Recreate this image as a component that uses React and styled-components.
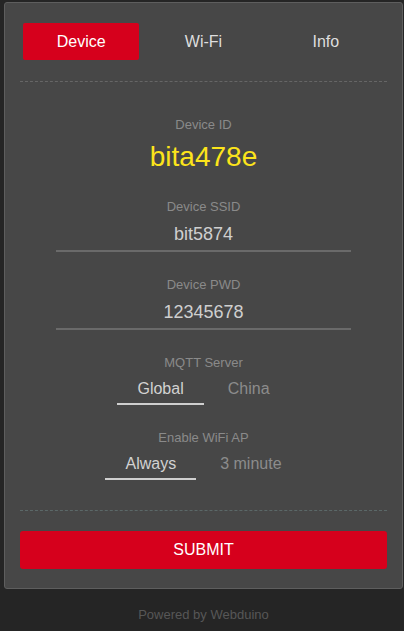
import React, { useState } from "react";
import styled, { createGlobalStyle } from "styled-components";

const GlobalStyle = createGlobalStyle`
  html, body {
    margin: 0;
    padding: 0;
    background: #252525;
    font-family: "Liberation Sans", Arial, sans-serif;
  }
`;

const Page = styled.div`
  min-height: 631px;
  padding: 2px 1px 0 4px;
  box-sizing: border-box;
`;

const Card = styled.div`
  background: #474747;
  border: 1px solid #5e5e5e;
  border-radius: 3px;
  padding: 17px 15px 19px;
  box-sizing: border-box;
`;

const Tabs = styled.div`
  display: grid;
  grid-template-columns: repeat(3, 1fr);
`;

const Tab = styled.div`
  margin: 3px;
  height: 37px;
  line-height: 37px;
  text-align: center;
  font-size: 16px;
  border-radius: 2px;
  color: ${(p) => (p.$active ? "#ffffff" : "#dedede")};
  background: ${(p) => (p.$active ? "#d6001c" : "transparent")};
  cursor: pointer;
`;

const Divider = styled.div`
  margin-top: ${(p) => p.$top}px;
  border-top: 1px dashed ${(p) => p.$color || "#666"};
`;

const Form = styled.div`
  text-align: center;
`;

const Label = styled.div`
  font-size: 13px;
  line-height: 16px;
  color: #8a8a8a;
  margin-top: ${(p) => p.$top}px;
`;

const DeviceId = styled.div`
  margin-top: 8px;
  font-size: 28px;
  line-height: 32px;
  color: #fce41b;
`;

const Field = styled.div`
  width: 295px;
  margin: 7px auto 0;
  padding-bottom: 4px;
  border-bottom: 2px solid #6a6a6a;
  font-size: 18px;
  line-height: 24px;
  color: #cfcfcf;
`;

const Options = styled.div`
  margin-top: 8px;
  display: flex;
  justify-content: center;
  gap: 4px;
`;

const Option = styled.div`
  padding: 0 20px 4px;
  font-size: 16px;
  line-height: 20px;
  color: ${(p) => (p.$active ? "#d2d2d2" : "#8c8c8c")};
  border-bottom: 2px solid ${(p) => (p.$active ? "#cfcfcf" : "transparent")};
  cursor: pointer;
`;

const Submit = styled.button`
  display: block;
  width: 100%;
  margin-top: 20px;
  height: 38px;
  border: none;
  border-radius: 3px;
  background: #d6001c;
  color: #fff;
  font-family: inherit;
  font-size: 16px;
`;

const Footer = styled.div`
  margin-top: 17px;
  text-align: center;
  font-size: 13px;
  line-height: 17px;
  color: #575757;
`;

function OptionGroup({ items, value, onChange }) {
  return (
    <Options>
      {items.map((item) => (
        <Option key={item} $active={item === value} onClick={() => onChange(item)}>
          {item}
        </Option>
      ))}
    </Options>
  );
}

export default function App() {
  const [tab, setTab] = useState("Device");
  const [server, setServer] = useState("Global");
  const [ap, setAp] = useState("Always");

  return (
    <Page>
      <GlobalStyle />
      <Card>
        <Tabs>
          {["Device", "Wi-Fi", "Info"].map((t) => (
            <Tab key={t} $active={t === tab} onClick={() => setTab(t)}>
              {t}
            </Tab>
          ))}
        </Tabs>
        <Divider $top={18} />

        <Form>
          <Label $top={35}>Device ID</Label>
          <DeviceId>bita478e</DeviceId>

          <Label $top={26}>Device SSID</Label>
          <Field>bit5874</Field>

          <Label $top={25}>Device PWD</Label>
          <Field>12345678</Field>

          <Label $top={25}>MQTT Server</Label>
          <OptionGroup items={["Global", "China"]} value={server} onChange={setServer} />

          <Label $top={25}>Enable WiFi AP</Label>
          <OptionGroup items={["Always", "3 minute"]} value={ap} onChange={setAp} />
        </Form>

        <Divider $top={30} $color="#5b6868" />
        <Submit>SUBMIT</Submit>
      </Card>
      <Footer>Powered by Webduino</Footer>
    </Page>
  );
}
